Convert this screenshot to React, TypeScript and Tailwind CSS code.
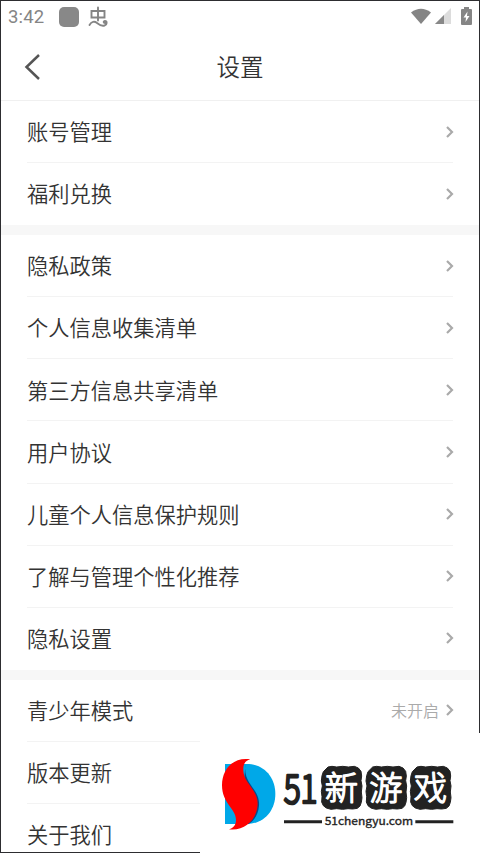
import clsx from "clsx";

type Row = { label: string; value?: string };

const groups: Row[][] = [
  [{ label: "账号管理" }, { label: "福利兑换" }],
  [
    { label: "隐私政策" },
    { label: "个人信息收集清单" },
    { label: "第三方信息共享清单" },
    { label: "用户协议" },
    { label: "儿童个人信息保护规则" },
    { label: "了解与管理个性化推荐" },
    { label: "隐私设置" },
  ],
  [{ label: "青少年模式", value: "未开启" }, { label: "版本更新" }, { label: "关于我们" }],
];

function StatusBar() {
  return (
    <div className="flex h-[31px] shrink-0 items-center pl-[7px] pr-[7px] text-[#858585]">
      <span className="w-[38px] pt-px font-[Roboto] text-[18.5px] font-normal leading-none tracking-[0.2px]">3:42</span>
      <span className="ml-[13px] size-5 rounded-[5px] bg-[#888]" />
      <svg className="ml-[9px]" width="22" height="22" viewBox="0 0 22 22" fill="none" stroke="currentColor" strokeWidth="1.9" strokeLinecap="round">
        <path d="M10 1.500v13M3.500 5h13v6.500h-13zM1.500 19c2-3.500 5-4 7.500-2s5 3.500 7.500 2.500c3-1 2.500-4.500.5-4.500-2 .2-1.500 2 0 2" />
      </svg>
      <div className="mb-px ml-auto flex items-center">
        <svg width="22" height="17" viewBox="0 0 22 17" fill="currentColor">
          <path d="M1 4.500Q11-3 21 4.500L11 16z" />
        </svg>
        <svg className="ml-[3px]" width="16" height="16" viewBox="0 0 16 16">
          <path d="M16 0v16H0z" fill="#dcdcdc" />
          <path d="M9 7v9H0z" fill="#888" />
        </svg>
        <svg className="ml-[10px]" width="11" height="18" viewBox="0 0 11 18">
          <path d="M3 2V0h5v2h2q1 0 1 1v14q0 1-1 1H1q-1 0-1-1V3q0-1 1-1z" fill="#858585" />
          <path d="M6.500 4.500 2.500 10.500h2.500L4.500 15l4-6H6z" fill="#fff" />
        </svg>
      </div>
    </div>
  );
}

function SettingRow({ row, last }: { row: Row; last: boolean }) {
  return (
    <div
      className={clsx(
        "mx-[26px] flex h-[62.1px] items-center border-b",
        last ? "border-transparent" : "border-[#f3f3f3]"
      )}
    >
      <span className="pb-[1.5px] text-[21.25px] leading-none">{row.label}</span>
      {row.value && <span className="ml-auto mr-[7px] pb-px text-[16px] leading-none text-[#aaa]">{row.value}</span>}
      <svg
        className={clsx("-mr-px", !row.value && "ml-auto")}
        width="8"
        height="12"
        viewBox="0 0 8 12"
        fill="none"
        stroke="#aaa"
        strokeWidth="2.2"
      >
        <path d="M1 1l5 5-5 5" />
      </svg>
    </div>
  );
}

// 印章 blocks behind the site name
const stamps = [
  { x: 362, char: "新" },
  { x: 496, char: "游" },
  { x: 629, char: "戏" },
];

function SiteBadge() {
  return (
    <div className="absolute bottom-0 right-0 h-[120px] w-[280px] bg-white font-['Noto_Sans_CJK_SC',sans-serif]">
      <svg width="280" height="120" viewBox="0 0 840 360">
        <path d="M75 93h65c52 0 86 40 86 90s-34 90-86 90H75z" fill="#00a8e8" />
        <path d="M137 92C126 155 181 164 177 218c-2 26-15 46-32 56l-20-60z" fill="#064b8c" />
        <path d="M151 79C134 84 127 95 131 121c4 30 43 52 42 93-2 44-37 81-86 75 14-5 21-13 21-29 0-32-42-49-42-103 0-49 34-86 85-78z" fill="#f00" />
        <text transform="translate(251 210) scale(.79 1)" fontSize="120" fontWeight="300" fill="#222" stroke="#222" strokeWidth="8" strokeLinejoin="round">
          51
        </text>
        {stamps.map((s) => (
          <g key={s.char} transform={`translate(${s.x} 99)`}>
            <path
              d="M22 3 34 1l14 2 18-2 17 2 18-2 12 5 8 10 2 14-2 14 3 16-2 18 2 17-2 14-4 11-8 7-14 2-14-1-16 2-18-2-17 2-14-4-9-7-5-11 1-16-2-16 3-16-3-15 2-16 4-12z"
              fill="#222"
              stroke="#222"
              strokeWidth="3"
              strokeLinejoin="round"
            />
            <text x="62" y="101" textAnchor="middle" fontSize="100" fontWeight="300" fill="#fff" stroke="#fff" strokeWidth="4" strokeLinejoin="round">
              {s.char}
            </text>
          </g>
        ))}
        <path d="M252 262h114v9H252zM646 262h114v9H646z" fill="#222" />
        <text x="374" y="276" fontSize="33" fontWeight="400" textLength="265" lengthAdjust="spacingAndGlyphs" fill="#222" stroke="#222" strokeWidth="1">
          51chengyu.com
        </text>
      </svg>
    </div>
  );
}

export default function App() {
  return (
    <div className="relative h-[853px] w-[480px] overflow-hidden">
      <div className="flex h-full flex-col overflow-hidden border border-[#2d2d30] bg-white font-['Noto_Sans_CJK_SC',sans-serif] font-[350] text-[#333]">
        <StatusBar />
        <header className="relative flex h-[69px] shrink-0 items-center justify-center border-b border-[#f0f0f0]">
          <svg className="absolute left-[23px] top-[22px]" width="17" height="26" viewBox="0 0 17 26" fill="none" stroke="#555" strokeWidth="2.5">
            <path d="M15 1 2.500 13 15 25" />
          </svg>
          <h1 className="pt-px text-[23.5px] leading-none">设置</h1>
        </header>
        {groups.map((rows, i) => (
          <section key={i} className={clsx("shrink-0", i > 0 && "border-t-10 border-[#f7f7f7]")}>
            {rows.map((row, j) => (
              <SettingRow key={row.label} row={row} last={j === rows.length - 1} />
            ))}
          </section>
        ))}
      </div>
      <SiteBadge />
    </div>
  );
}
